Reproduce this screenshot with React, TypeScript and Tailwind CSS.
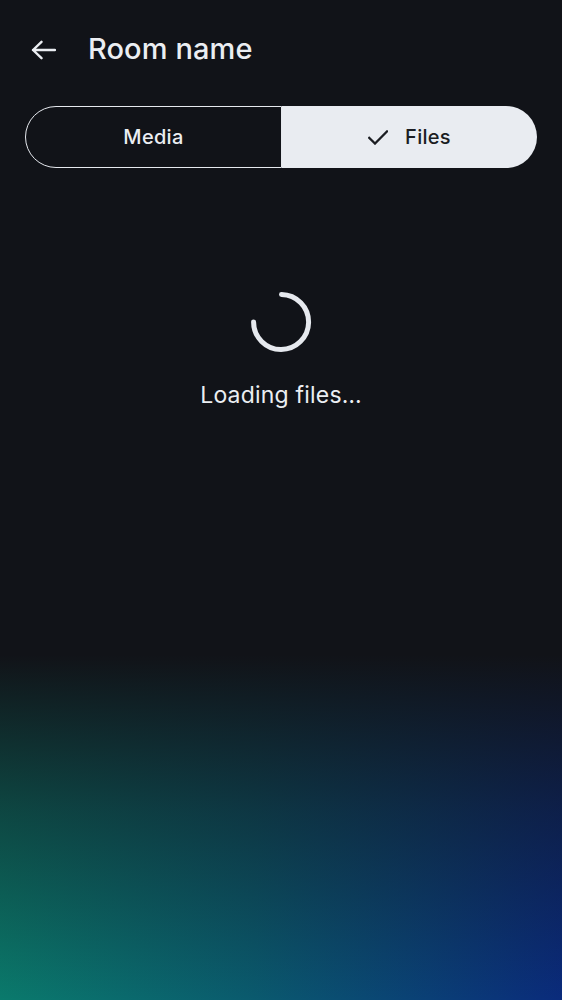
import React from "react";

// Segmented control tab
function Segment({
  label,
  selected,
  side,
}: {
  label: string;
  selected: boolean;
  side: "left" | "right";
}) {
  const shape = side === "left" ? "rounded-l-full" : "rounded-r-full";
  return (
    <div
      className={`flex flex-1 items-center justify-center gap-[17px] ${shape} ${
        selected
          ? "bg-[#e9ecf1] text-[#1b1d22]"
          : "border-[1.5px] border-[#e6e9ee] text-[#ebeef2]"
      }`}
    >
      {selected && (
        <svg width="20" height="15" viewBox="0 0 20 15" fill="none">
          <path
            d="M1.2 7.8 L7 13.6 L19 1.4"
            stroke="currentColor"
            strokeWidth={2.2}
            strokeLinecap="square"
          />
        </svg>
      )}
      <span className="text-[20px] font-medium tracking-[0.3px]">{label}</span>
    </div>
  );
}

export default function App() {
  return (
    <div
      className="flex h-[1000px] flex-col bg-[#111318] text-[#ebeef2]"
      style={{ fontFamily: "Inter, 'Noto Sans', sans-serif" }}
    >
      {/* Top bar */}
      <div className="flex h-[100px] items-center pl-[31px]">
        <svg width="25" height="20" viewBox="0 0 25 20" fill="none">
          <path
            d="M2 10 H24 M10.5 1.8 L2 10 L10.5 18.2"
            stroke="currentColor"
            strokeWidth={2.4}
            strokeLinecap="round"
            strokeLinejoin="round"
          />
        </svg>
        <h1 className="ml-[32px] -mt-[2px] text-[29px] leading-[34px] font-medium tracking-[0.1px]">
          Room name
        </h1>
      </div>

      {/* Media / Files switch */}
      <div className="mx-[25px] mt-[6px] flex h-[62px]">
        <Segment label="Media" selected={false} side="left" />
        <Segment label="Files" selected side="right" />
      </div>

      {/* Loading state */}
      <div className="flex flex-col items-center">
        <svg className="mt-[122px]" width="64" height="64" viewBox="0 0 64 64" fill="none">
          <path
            d="M32.5 4.5 A27.5 27.5 0 1 1 4.6 32"
            stroke="#e6e9ee"
            strokeWidth={5}
            strokeLinecap="round"
          />
        </svg>
        <p className="mt-[27px] text-[23px] leading-[28px] tracking-[0.2px]">
          Loading files…
        </p>
      </div>

      <div className="flex-1" />

      {/* Bottom glow */}
      <div className="h-[345px] bg-[linear-gradient(to_right,#0a7a6c,#0a5a6e_45%,#0a2b7c)]">
        <div className="h-full bg-[linear-gradient(to_bottom,#111318,rgba(17,19,24,0.5)_45%,rgba(17,19,24,0))]" />
      </div>
    </div>
  );
}
